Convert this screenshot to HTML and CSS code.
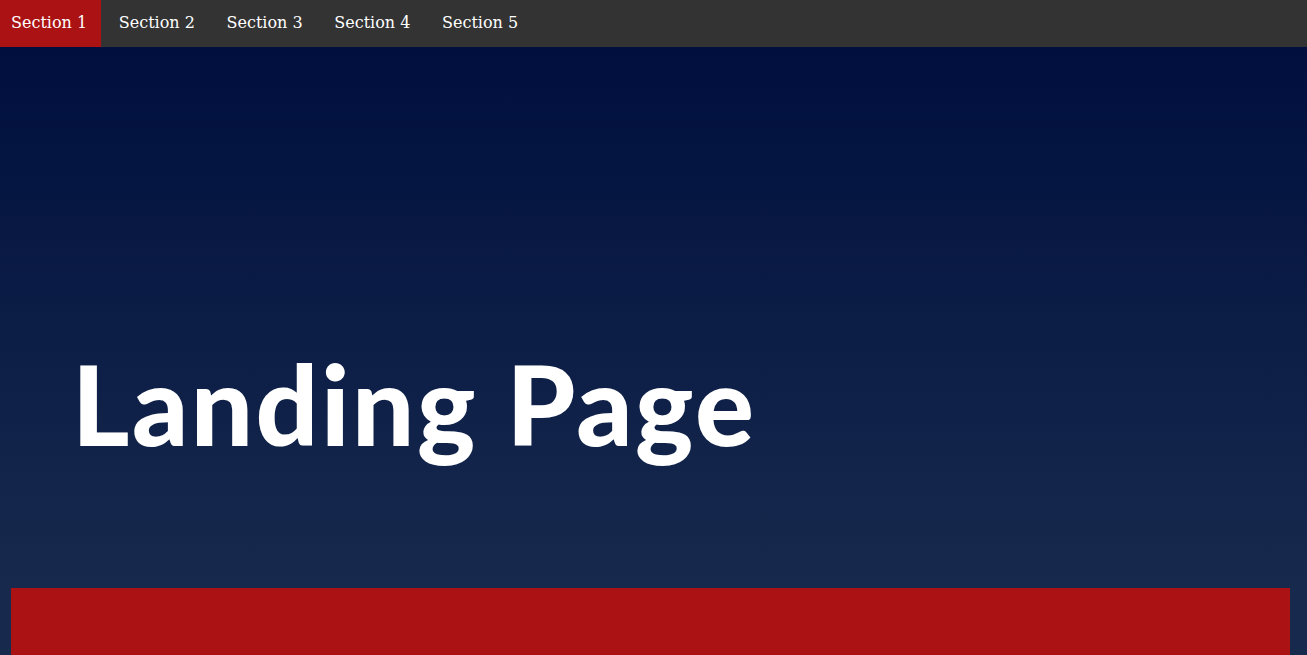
FILE: index.html
```html
<!DOCTYPE html>
<html lang="en">
<head>
<meta charset="utf-8">
<title>Landing Page</title>
<link rel="stylesheet" href="styles.css">
</head>
<body>
<nav class="navbar">
  <a class="nav-link active" href="#s1">Section 1</a>
  <a class="nav-link" href="#s2">Section 2</a>
  <a class="nav-link" href="#s3">Section 3</a>
  <a class="nav-link" href="#s4">Section 4</a>
  <a class="nav-link" href="#s5">Section 5</a>
</nav>
<main class="page">
  <header class="hero">
    <h1 class="hero-title">Landing Page</h1>
  </header>
  <section class="section-box" id="s1"></section>
</main>
</body>
</html>
```
FILE: styles.css
```css
html, body {
  margin: 0;
  padding: 0;
}
body {
  background: #172b4e;
  overflow: hidden;
  height: 655px;
}
.navbar {
  display: flex;
  height: 47px;
  background: #333333;
  font-family: "DejaVu Serif", serif;
  font-size: 16px;
}
.nav-link {
  display: flex;
  align-items: center;
  box-sizing: border-box;
  width: 101px;
  padding: 0 0 3px 11px;
  margin-right: 6.75px;
  color: #ffffff;
  text-decoration: none;
  white-space: nowrap;
}
.nav-link.active {
  background: #ab1214;
}
.page {
  background: linear-gradient(to bottom, #000f3e 0px, #172a4d 541px, #172a4d 100%);
  height: 608px;
}
.hero {
  height: 541px;
  box-sizing: border-box;
  padding: 296px 0 0 72px;
}
.hero-title {
  margin: 0;
  font-family: Lato, Roboto, sans-serif;
  font-weight: 900;
  font-size: 110px;
  line-height: 120px;
  color: #ffffff;
  letter-spacing: 2.5px;
}
.section-box {
  margin: 0 17px 0 11px;
  height: 67px;
  background: #ab1214;
}
```
